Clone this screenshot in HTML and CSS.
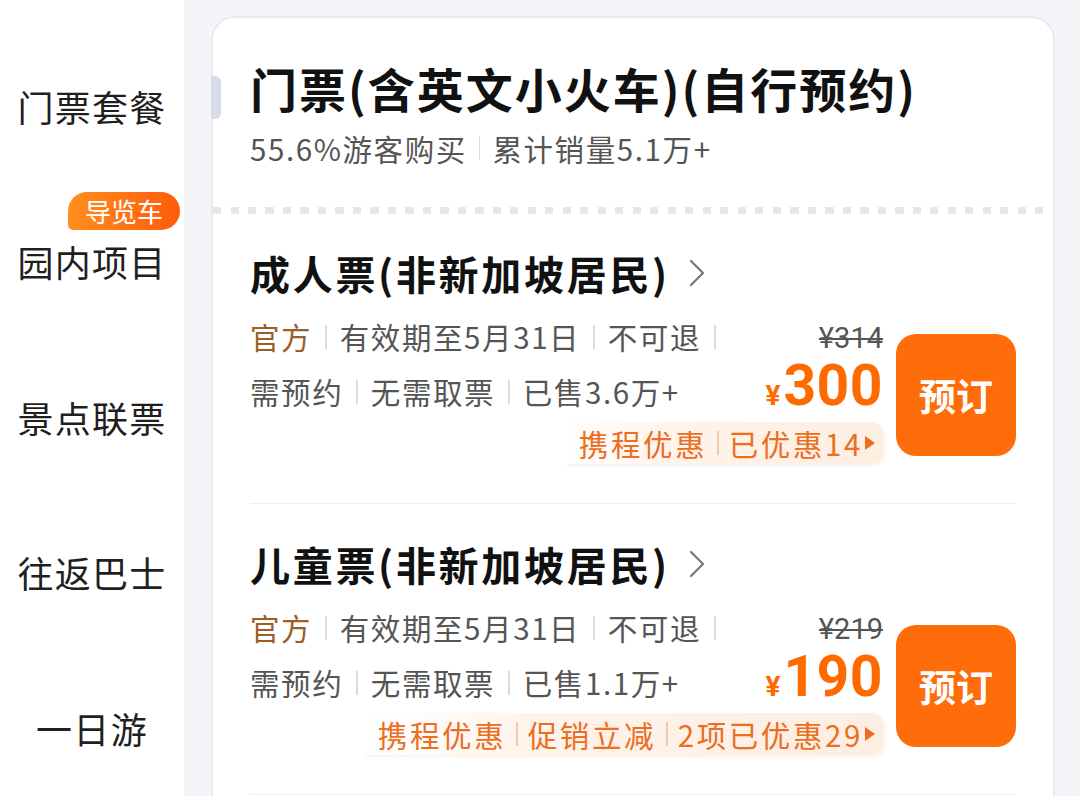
FILE: index.html
```html
<!DOCTYPE html>
<html lang="zh-CN">
<head>
<meta charset="utf-8">
<title>门票套餐</title>
<link rel="stylesheet" href="styles.css">
</head>
<body>
<div class="page">
  <aside class="side">
    <div class="nav-item">门票套餐</div>
    <div class="nav-item"><span class="badge">导览车</span>园内项目</div>
    <div class="nav-item">景点联票</div>
    <div class="nav-item">往返巴士</div>
    <div class="nav-item">一日游</div>
  </aside>
  <main class="main">
    <section class="card">
      <span class="tab"></span>
      <header class="card-head">
        <h1 class="pkg-title">门票(含英文小火车)(自行预约)</h1>
        <div class="pkg-sub"><span>55.6%游客购买</span><i class="sep"></i><span>累计销量5.1万+</span></div>
      </header>
      <div class="dots"></div>

      <div class="ticket">
        <div class="t-title">
          <span>成人票(非新加坡居民)</span>
          <svg class="chev" viewBox="0 0 18 30" width="18" height="30"><polyline points="3,3 15,15 3,27" fill="none" stroke="#777" stroke-width="2.2" stroke-linecap="round" stroke-linejoin="round"/></svg>
        </div>
        <div class="t-body">
          <div class="t-main">
            <div class="t-top">
              <div class="rows">
                <div class="row"><span class="official">官方</span><i class="sep"></i><span>有效期至5月31日</span><i class="sep"></i><span>不可退</span><i class="sep"></i></div>
                <div class="row"><span>需预约</span><i class="sep"></i><span>无需取票</span><i class="sep"></i><span>已售3.6万+</span></div>
              </div>
              <div class="price">
                <div class="old">¥314</div>
                <div class="now"><span class="yen">¥</span>300</div>
              </div>
            </div>
            <div class="promo-wrap">
              <div class="promo"><span>携程优惠</span><i class="psep"></i><span>已优惠14</span><i class="tri"></i></div>
            </div>
          </div>
          <div class="book">预订</div>
        </div>
      </div>

      <div class="divider"></div>

      <div class="ticket">
        <div class="t-title">
          <span>儿童票(非新加坡居民)</span>
          <svg class="chev" viewBox="0 0 18 30" width="18" height="30"><polyline points="3,3 15,15 3,27" fill="none" stroke="#777" stroke-width="2.2" stroke-linecap="round" stroke-linejoin="round"/></svg>
        </div>
        <div class="t-body">
          <div class="t-main">
            <div class="t-top">
              <div class="rows">
                <div class="row"><span class="official">官方</span><i class="sep"></i><span>有效期至5月31日</span><i class="sep"></i><span>不可退</span><i class="sep"></i></div>
                <div class="row"><span>需预约</span><i class="sep"></i><span>无需取票</span><i class="sep"></i><span>已售1.1万+</span></div>
              </div>
              <div class="price">
                <div class="old">¥219</div>
                <div class="now"><span class="yen">¥</span>190</div>
              </div>
            </div>
            <div class="promo-wrap">
              <div class="promo"><span>携程优惠</span><i class="psep"></i><span>促销立减</span><i class="psep"></i><span>2项已优惠29</span><i class="tri"></i></div>
            </div>
          </div>
          <div class="book">预订</div>
        </div>
      </div>
      <div class="divider"></div>
    </section>
  </main>
</div>
</body>
</html>
```

FILE: styles.css
```css
* { box-sizing: border-box; }
html, body { margin: 0; padding: 0; }
body {
  width: 1080px;
  height: 796px;
  overflow: hidden;
  font-family: "Noto Sans CJK SC", "Noto Sans", sans-serif;
  color: #1a1a1a;
  background: #f3f5f8;
}
.page { display: flex; height: 796px; }

.side {
  width: 184px;
  flex: none;
  background: #fff;
  padding-top: 28px;
}
.nav-item {
  position: relative;
  height: 155.5px;
  display: flex;
  align-items: center;
  justify-content: center;
  font-size: 36px;
  color: #1f1f1f;
  letter-spacing: 1.3px;
}
.badge {
  position: absolute;
  top: 8px;
  left: 68px;
  width: 112px;
  height: 38px;
  border-radius: 19px 19px 19px 5px;
  background: linear-gradient(90deg, #ff8f1f, #ff5a0a);
  color: #fff;
  font-size: 26px;
  line-height: 38px;
  text-align: center;
  letter-spacing: 0;
}

.main {
  flex: 1;
  padding: 16px 25px 0 27px;
  overflow: hidden;
}
.card {
  position: relative;
  background: #fff;
  border: 2px solid #e7eaee;
  border-radius: 24px;
  min-height: 900px;
}
.tab {
  position: absolute;
  left: -2px;
  top: 58px;
  width: 10px;
  height: 43px;
  background: #d6dde6;
  border-radius: 0 6px 6px 0;
}
.card-head { padding: 42px 37px 0 37px; }
.pkg-title {
  margin: 0;
  font-size: 47px;
  line-height: 56px;
  font-weight: 700;
  letter-spacing: 2px;
  color: #111;
}
.pkg-sub {
  margin-top: 14px;
  display: flex;
  align-items: center;
  font-size: 29.5px;
  line-height: 36px;
  letter-spacing: 1.6px;
  color: #555;
}
.sep {
  display: inline-block;
  width: 1.5px;
  height: 24px;
  background: #dcdcdc;
  margin: 0 12px;
}
.dots {
  margin-top: 41px;
  height: 7px;
  background: repeating-linear-gradient(90deg, #e7e7e7 0 8px, transparent 8px 17.5px);
}

.ticket { padding: 33px 37px 39px 37px; }
.divider { height: 1px; margin: 0 37px; background: #eeeeee; }
.ticket + .divider + .ticket { padding-top: 34px; }
.t-title {
  display: flex;
  align-items: center;
  gap: 18px;
  font-size: 40px;
  line-height: 52px;
  font-weight: 700;
  letter-spacing: 2.7px;
  color: #111;
}
.chev { flex: none; }
.t-body { display: flex; margin-top: 10px; }
.t-main { flex: 1; display: flex; flex-direction: column; }
.t-top { display: flex; justify-content: space-between; }
.rows { display: flex; flex-direction: column; }
.row {
  display: flex;
  align-items: center;
  font-size: 29.5px;
  line-height: 55px;
  letter-spacing: 1.6px;
  color: #555;
}
.row .sep { margin: 0 13px; }
.official { color: #9d5d26; }
.price { text-align: right; }
.old {
  margin-top: 14px;
  font-family: Roboto, "Noto Sans", sans-serif;
  font-size: 29px;
  line-height: 30px;
  color: #555;
  text-decoration: line-through;
  text-decoration-thickness: 2px;
}
.now {
  font-family: Roboto, "Noto Sans", sans-serif;
  font-weight: 700;
  font-size: 57px;
  line-height: 66px;
  height: 66px;
  color: #ff6a00;
  letter-spacing: 0.5px;
}
.yen { font-size: 28px; line-height: 1; margin-right: 3px; letter-spacing: 0; }
.promo-wrap { display: flex; justify-content: flex-end; margin-top: 3px; }
.promo {
  display: flex;
  align-items: center;
  height: 42px;
  padding: 0 8px 0 14px;
  border-radius: 0 12px 12px 0;
  background: linear-gradient(90deg, rgba(255, 241, 230, 0) 0%, #fff3ea 35%, #fdeee2 100%);
  box-shadow: 2px 2px 3px rgba(240, 200, 170, 0.25);
  font-size: 29.5px;
  letter-spacing: 2.6px;
  color: #ec6e1e;
}
.psep {
  display: inline-block;
  width: 1.5px;
  height: 24px;
  background: #f3c9a8;
  margin: 0 10px;
}
.tri {
  display: inline-block;
  width: 0;
  height: 0;
  margin-left: 2px;
  border-top: 7px solid transparent;
  border-bottom: 7px solid transparent;
  border-left: 10px solid #ec6e1e;
}
.book {
  flex: none;
  width: 120px;
  height: 122px;
  margin: 25px 0 0 13px;
  border-radius: 20px;
  background: #ff6d0a;
  color: #fff;
  font-size: 37px;
  font-weight: 700;
  display: flex;
  align-items: center;
  justify-content: center;
}
```
